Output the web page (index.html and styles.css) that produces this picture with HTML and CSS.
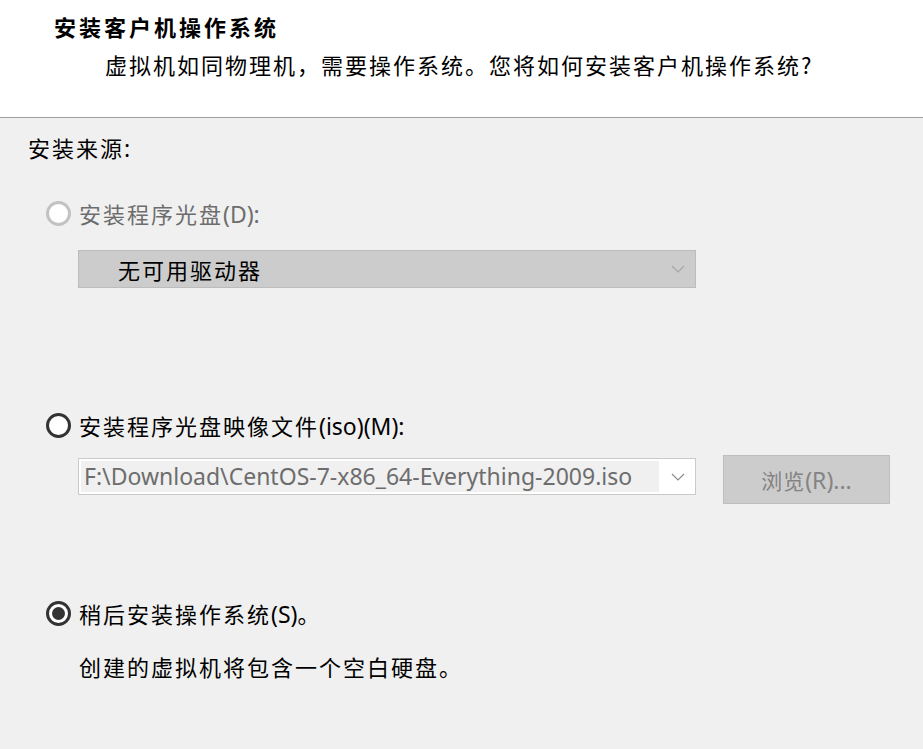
FILE: index.html
```html
<!DOCTYPE html>
<html>
<head>
    <title>新建虚拟机向导</title>
    <link rel="stylesheet" href="styles.css">
</head>
    <body>
        <div class="header">
            <div class="title">安装客户机操作系统</div>
            <div class="subtitle">虚拟机如同物理机，需要操作系统。您将如何安装客户机操作系统?</div>
        </div>

        <div class="main">
            <div class="section-label">安装来源<span class="latin">:</span></div>

            <div class="radio-row disabled">
                <span class="radio"></span>
                <span>安装程序光盘<span class="latin">(D):</span></span>
            </div>
            <div class="combo combo-disabled">
                <span class="combo-text">无可用驱动器</span>
                <svg class="chevron" width="14" height="8" viewBox="0 0 14 8"><path d="M1 1 L7 7 L13 1" fill="none" stroke="#a6a6a6" stroke-width="1.2"/></svg>
            </div>

            <div class="radio-row spaced">
                <span class="radio"></span>
                <span>安装程序光盘映像文件<span class="latin">(iso)(M):</span></span>
            </div>
            <div class="file-row">
                <div class="combo combo-edit">
                    <span class="edit-text">F:\Download\CentOS-7-x86_64-Everything-2009.iso</span>
                    <svg class="chevron" width="14" height="8" viewBox="0 0 14 8"><path d="M1 1 L7 7 L13 1" fill="none" stroke="#8c8c8c" stroke-width="1.2"/></svg>
                </div>
                <button class="browse" disabled>浏览<span class="latin">(R)...</span></button>
            </div>

            <div class="radio-row later">
                <span class="radio checked"></span>
                <span>稍后安装操作系统<span class="latin">(S)</span>。</span>
            </div>
            <div class="note">创建的虚拟机将包含一个空白硬盘。</div>
        </div>
    </body>
</html>
```

FILE: styles.css
```css
body {
    margin: 0;
    background-color: #f0f0f0;
    color: #000;
    font-family: "Noto Sans CJK SC", "Noto Sans", sans-serif;
    font-size: 22px;
    letter-spacing: 2px;
}
.latin {
    font-family: "Noto Sans", "Open Sans", sans-serif;
    font-size: 23px;
    letter-spacing: 0;
}
.header {
    height: 117px;
    background-color: #fff;
    border-bottom: 1px solid #a0a0a0;
    padding-left: 54px;
    box-sizing: content-box;
}
.title {
    padding-top: 10px;
    line-height: 32px;
    font-weight: bold;
    letter-spacing: 3px;
}
.subtitle {
    margin-top: 6px;
    margin-left: 51px;
    line-height: 32px;
}
.main {
    padding: 13px 28px 0 28px;
}
.section-label {
    line-height: 32px;
}
.radio-row {
    display: flex;
    align-items: center;
    gap: 8px;
    margin-top: 33px;
    margin-left: 18px;
    height: 32px;
}
.radio-row.spaced {
    margin-top: 121px;
}
.radio-row.later {
    margin-top: 93px;
}
.radio-row.disabled {
    color: #6d6d6d;
}
.radio {
    width: 19px;
    height: 19px;
    border: 3px solid #333;
    border-radius: 50%;
    background-color: #fff;
    position: relative;
}
.disabled .radio {
    border-color: #c2c2c2;
}
.radio.checked::after {
    content: "";
    position: absolute;
    left: 3px;
    top: 3px;
    width: 13px;
    height: 13px;
    border-radius: 50%;
    background-color: #333;
}
.combo {
    display: flex;
    align-items: center;
    justify-content: space-between;
    box-sizing: border-box;
    width: 618px;
    margin-left: 50px;
}
.combo-disabled {
    height: 38px;
    margin-top: 21px;
    background-color: #cccccc;
    border: 1px solid #bcbcbc;
    padding: 0 10px 0 39px;
}
.combo-text {
    line-height: 30px;
}
.file-row {
    display: flex;
    align-items: flex-start;
    gap: 27px;
    margin-top: 14px;
}
.combo-edit {
    height: 37px;
    margin-top: 3px;
    background-color: #fff;
    border: 1px solid #cacaca;
    padding: 2px 10px 2px 2px;
    align-items: stretch;
}
.edit-text {
    flex: 1;
    background-color: #f0f0f0;
    color: #6d6d6d;
    font-family: "Noto Sans", "Open Sans", sans-serif;
    font-size: 23px;
    letter-spacing: 0;
    line-height: 31px;
    padding-left: 3px;
    margin-right: 12px;
    white-space: nowrap;
    overflow: hidden;
}
.combo-edit .chevron {
    align-self: center;
}
.browse {
    width: 167px;
    height: 49px;
    padding: 0;
    background-color: #cccccc;
    border: 1px solid #bfbfbf;
    color: #838383;
    font-family: "Noto Sans CJK SC", "Noto Sans", sans-serif;
    font-size: 21px;
    letter-spacing: 1px;
}
.note {
    margin-top: 21px;
    margin-left: 51px;
    line-height: 32px;
}
```
